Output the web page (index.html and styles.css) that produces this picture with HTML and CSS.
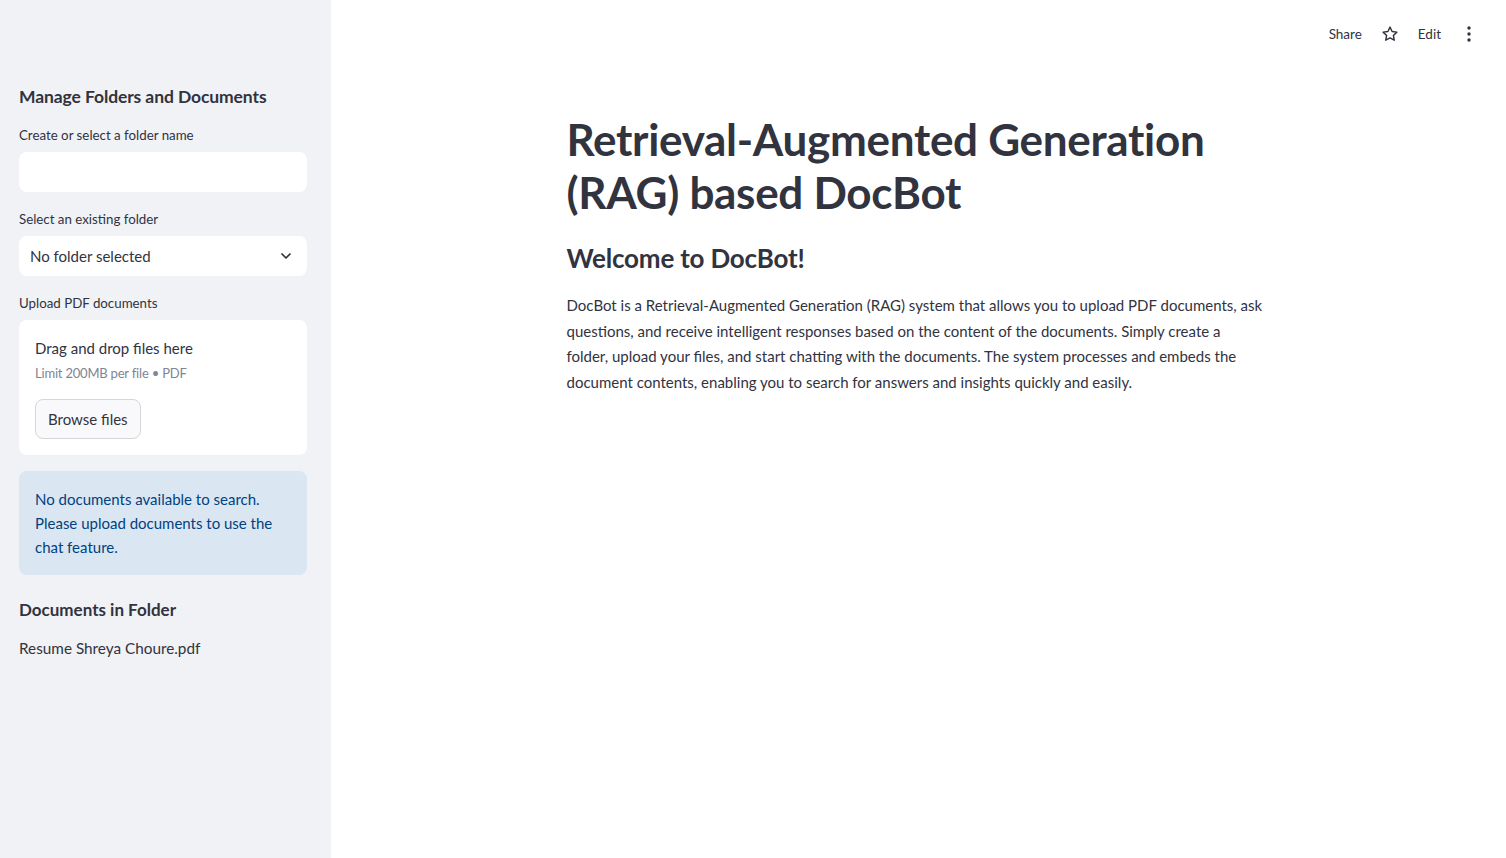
FILE: index.html
```html
<!DOCTYPE html>
<html lang="en">
<head>
<meta charset="utf-8">
<title>DocBot</title>
<link rel="stylesheet" href="styles.css">
</head>
<body>
<div class="app">
  <aside class="sidebar">
    <h3 class="side-heading">Manage Folders and Documents</h3>
    <div class="field">
      <label class="label">Create or select a folder name</label>
      <div class="input"></div>
    </div>
    <div class="field">
      <label class="label">Select an existing folder</label>
      <div class="input select">
        <span>No folder selected</span>
        <svg class="chev" width="16" height="16" viewBox="0 0 24 24"><path d="M6 9l6 6 6-6" fill="none" stroke="#31333f" stroke-width="2.6" stroke-linecap="round" stroke-linejoin="round"/></svg>
      </div>
    </div>
    <div class="field">
      <label class="label">Upload PDF documents</label>
      <div class="dropzone">
        <div class="dz-title">Drag and drop files here</div>
        <div class="dz-sub">Limit 200MB per file • PDF</div>
        <button class="btn">Browse files</button>
      </div>
    </div>
    <div class="info">No documents available to search. Please upload documents to use the chat feature.</div>
    <h4 class="side-sub">Documents in Folder</h4>
    <div class="doc">Resume Shreya Choure.pdf</div>
  </aside>
  <main class="main">
    <header class="toolbar">
      <span class="tb-text">Share</span>
      <svg class="tb-icon" width="18" height="18" viewBox="0 0 24 24"><path d="M12 2.8l2.8 5.9 6.4.8-4.7 4.4 1.2 6.4L12 17.2l-5.7 3.1 1.2-6.4-4.7-4.4 6.4-.8z" fill="none" stroke="#31333f" stroke-width="1.9" stroke-linejoin="round"/></svg>
      <span class="tb-text">Edit</span>
      <svg class="tb-icon kebab" width="16" height="18" viewBox="0 0 16 18"><circle cx="8" cy="3" r="1.7" fill="#31333f"/><circle cx="8" cy="9" r="1.7" fill="#31333f"/><circle cx="8" cy="15" r="1.7" fill="#31333f"/></svg>
    </header>
    <section class="content">
      <h1 class="title">Retrieval-Augmented Generation (RAG) based DocBot</h1>
      <h2 class="subtitle">Welcome to DocBot!</h2>
      <p class="body">DocBot is a Retrieval-Augmented Generation (RAG) system that allows you to upload PDF documents, ask questions, and receive intelligent responses based on the content of the documents. Simply create a folder,&nbsp;upload your files, and start chatting with the documents. The system processes and embeds the document contents, enabling you to search for answers and insights quickly and easily.</p>
    </section>
  </main>
</div>
</body>
</html>
```

FILE: styles.css
```css
* { box-sizing: border-box; }
html, body { margin: 0; padding: 0; }
body {
  font-family: "Source Sans Pro", Lato, "Liberation Sans", sans-serif;
  color: #31333f;
  background: #ffffff;
  width: 1506px;
  height: 858px;
  overflow: hidden;
}
.app {
  display: flex;
  height: 858px;
}
.sidebar {
  width: 331px;
  flex: none;
  background: #f0f2f6;
  padding: 85px 24px 0 19px;
  display: flex;
  flex-direction: column;
}
.side-heading {
  margin: 0;
  font-size: 17.5px;
  font-weight: 700;
  line-height: 24px;
  letter-spacing: -0.1px;
}
.field {
  display: flex;
  flex-direction: column;
  gap: 6px;
  margin-top: 15px;
}
.field + .field { margin-top: 16px; }
.label {
  font-size: 13.3px;
  line-height: 22px;
}
.input {
  height: 40px;
  background: #ffffff;
  border-radius: 8px;
}
.select {
  display: flex;
  align-items: center;
  justify-content: space-between;
  padding: 0 13px 0 11px;
  font-size: 15px;
}
.chev { display: block; }
.dropzone {
  background: #ffffff;
  border-radius: 8px;
  padding: 16px;
  display: flex;
  flex-direction: column;
  align-items: flex-start;
}
.dz-title {
  font-size: 15px;
  line-height: 24px;
}
.dz-sub {
  font-size: 13px;
  letter-spacing: -0.2px;
  line-height: 20px;
  color: #808495;
  margin-top: 3px;
}
.btn {
  margin-top: 16px;
  height: 40px;
  padding: 0 12px;
  font: inherit;
  font-size: 15px;
  color: #31333f;
  background: #f9f9fb;
  border: 1px solid #d5d6da;
  border-radius: 8px;
}
.info {
  margin-top: 16px;
  background: #dbe6f3;
  color: #004280;
  border-radius: 8px;
  padding: 16px;
  font-size: 15px;
  line-height: 24px;
}
.side-sub {
  margin: 24px 0 0;
  font-size: 17px;
  font-weight: 700;
  line-height: 22px;
}
.doc {
  margin-top: 15px;
  font-size: 15.3px;
  line-height: 25.6px;
}
.main {
  flex: 1;
  display: flex;
  flex-direction: column;
}
.toolbar {
  display: flex;
  justify-content: flex-end;
  align-items: center;
  height: 67px;
  padding-right: 29px;
}
.tb-text {
  font-size: 13.5px;
  padding: 0 9px;
}
.tb-icon { margin: 0 10px; }
.kebab { margin: 0 0 0 11px; }
.content {
  width: 704px;
  margin: 46px auto 0;
}
.title {
  margin: 0;
  font-size: 44px;
  font-weight: 700;
  line-height: 53px;
  letter-spacing: -0.3px;
}
.subtitle {
  margin: 22px 0 0;
  font-size: 26px;
  font-weight: 700;
  line-height: 34px;
  letter-spacing: -0.2px;
}
.body {
  margin: 18px 0 0;
  font-size: 15px;
  line-height: 25.6px;
}
```
